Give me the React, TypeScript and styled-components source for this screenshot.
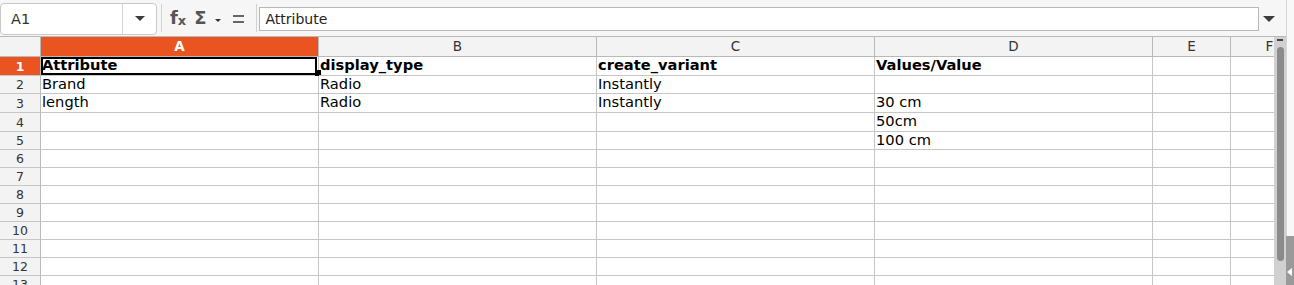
import React from 'react';
import styled, { createGlobalStyle } from 'styled-components';

const GlobalStyle = createGlobalStyle`
  html, body {
    margin: 0;
    padding: 0;
    background: #fff;
  }
  body {
    font-family: "DejaVu Sans", "Liberation Sans", sans-serif;
  }
`;

const ORANGE = '#e95420';
const GRID = '#c6c6c6';
const HEAD_LINE = '#b9b9b9';

const Window = styled.div`
  width: 1294px;
  height: 285px;
  overflow: hidden;
  display: flex;
  background: #fff;
`;

const Main = styled.div`
  flex: 1;
  min-width: 0;
  display: flex;
  flex-direction: column;
`;

/* toolbar */

const Toolbar = styled.div`
  height: 36px;
  flex-shrink: 0;
  border-bottom: 1px solid ${HEAD_LINE};
  background: #f6f6f6;
  display: flex;
  align-items: center;
`;

const NameBox = styled.div`
  width: 157px;
  height: 32px;
  margin-top: 1px;
  box-sizing: border-box;
  border: 1px solid #c9c9c9;
  border-radius: 4px;
  background: #fff;
  display: flex;
`;

const NameField = styled.div`
  flex: 1;
  padding-left: 10px;
  font-size: 14.5px;
  line-height: 30px;
  color: #333;
`;

const NameDrop = styled.div`
  width: 33px;
  border-left: 1px solid #d4d4d4;
  display: flex;
  align-items: center;
  justify-content: center;
`;

const Caret = styled.div<{ $w: number; $h: number; $color?: string }>`
  width: 0;
  height: 0;
  border-left: ${(p) => p.$w / 2}px solid transparent;
  border-right: ${(p) => p.$w / 2}px solid transparent;
  border-top: ${(p) => p.$h}px solid ${(p) => p.$color || '#3c3c3c'};
`;

const Separator = styled.div<{ $ml: number }>`
  width: 1px;
  height: 28px;
  margin-left: ${(p) => p.$ml}px;
  background: #d2d2d2;
`;

const FxIcon = styled.div`
  margin-left: 8px;
  display: flex;
  align-items: baseline;
  color: #555;
  font-weight: bold;
  font-family: "DejaVu Sans", sans-serif;
`;

const FxF = styled.span`
  font-size: 18px;
  line-height: 18px;
`;

const FxX = styled.span`
  font-size: 13px;
  line-height: 13px;
  margin-left: 0;
  position: relative;
  top: 1px;
`;

const SigmaIcon = styled.span`
  margin-left: 8px;
  font-size: 18px;
  font-weight: bold;
  color: #555;
  line-height: 18px;
`;

const SmallCaret = styled.div`
  margin-left: 8px;
  margin-top: 4px;
`;

const EqualIcon = styled.div`
  margin-left: 12px;
  margin-top: 2px;
  width: 11px;
  height: 4px;
  border-top: 2px solid #666;
  border-bottom: 2px solid #666;
`;

const FormulaInput = styled.div`
  margin-left: 2px;
  width: 1000px;
  height: 24px;
  margin-top: 1px;
  box-sizing: border-box;
  border: 1px solid #b8b8b8;
  background: #fff;
  padding-left: 6px;
  font-size: 14px;
  line-height: 22px;
  color: #222;
`;

const ExpandCaret = styled.div`
  margin-left: 4px;
  margin-top: 1px;
`;

/* sheet */

const Sheet = styled.div`
  flex: 1;
  display: flex;
  min-height: 0;
`;

const GridPane = styled.div`
  flex: 1;
  min-width: 0;
  overflow: hidden;
`;

const Row = styled.div<{ $h: number }>`
  display: flex;
  height: ${(p) => p.$h}px;
  width: max-content;
`;

const Corner = styled.div`
  width: 41px;
  flex-shrink: 0;
  box-sizing: border-box;
  background: #f3f3f3;
  border-right: 1px solid ${HEAD_LINE};
  border-bottom: 1px solid ${HEAD_LINE};
`;

const ColHead = styled.div<{ $w: number; $active?: boolean }>`
  width: ${(p) => p.$w}px;
  flex-shrink: 0;
  box-sizing: border-box;
  border-right: 1px solid ${HEAD_LINE};
  border-bottom: 1px solid ${HEAD_LINE};
  background: ${(p) => (p.$active ? ORANGE : '#f3f3f3')};
  color: ${(p) => (p.$active ? '#fff' : '#333')};
  font-weight: ${(p) => (p.$active ? 'bold' : 'normal')};
  font-size: 13.5px;
  line-height: 19px;
  text-align: center;
`;

const RowHead = styled.div<{ $active?: boolean }>`
  width: 41px;
  flex-shrink: 0;
  box-sizing: border-box;
  border-right: 1px solid ${HEAD_LINE};
  border-bottom: 1px solid ${GRID};
  background: ${(p) => (p.$active ? ORANGE : '#f3f3f3')};
  color: ${(p) => (p.$active ? '#fff' : '#333')};
  font-weight: ${(p) => (p.$active ? 'bold' : 'normal')};
  font-size: 12.5px;
  display: flex;
  align-items: center;
  justify-content: center;
`;

const Cell = styled.div<{ $w: number; $bold?: boolean }>`
  position: relative;
  width: ${(p) => p.$w}px;
  flex-shrink: 0;
  box-sizing: border-box;
  border-right: 1px solid ${GRID};
  border-bottom: 1px solid ${GRID};
  padding-left: 1px;
  font-size: 14.67px;
  font-weight: ${(p) => (p.$bold ? 'bold' : 'normal')};
  color: #000;
  white-space: nowrap;
  line-height: 16px;
`;

const Selection = styled.div`
  position: absolute;
  top: 0;
  left: 0;
  right: 1px;
  bottom: 0;
  border: 2px solid #000;
  box-sizing: border-box;
`;

const FillHandle = styled.div`
  position: absolute;
  right: -3px;
  bottom: -1px;
  width: 6px;
  height: 6px;
  background: #000;
`;

/* scrollbar + sidebar */

const VScroll = styled.div`
  width: 12px;
  flex-shrink: 0;
  background: #d0d0d0;
  display: flex;
  flex-direction: column;
  align-items: center;
`;

const ScrollButton = styled.div`
  height: 9px;
  width: 100%;
  display: flex;
  justify-content: center;
  padding-top: 2px;
  box-sizing: border-box;
`;

const MinusMark = styled.div`
  width: 6px;
  height: 2px;
  background: #444;
`;

const Thumb = styled.div`
  margin-top: 1px;
  width: 7px;
  height: 214px;
  border-radius: 4px;
  background: #8b8b8b;
`;

const Sidebar = styled.div`
  width: 8px;
  flex-shrink: 0;
  display: flex;
  flex-direction: column;
`;

const SidebarFill = styled.div`
  flex: 1;
  border-left: 1px solid #d6d6d6;
  background: #f8f8f8;
`;

const DeckToggle = styled.div`
  height: 49px;
  flex-shrink: 0;
  background: #9a9a9a;
  box-sizing: border-box;
  padding-top: 32px;
  padding-left: 1px;
`;

const LeftArrow = styled.div`
  width: 0;
  height: 0;
  border-top: 4px solid transparent;
  border-bottom: 4px solid transparent;
  border-right: 5px solid #fff;
`;

const columns = [
  { name: 'A', w: 278 },
  { name: 'B', w: 278 },
  { name: 'C', w: 278 },
  { name: 'D', w: 278 },
  { name: 'E', w: 78 },
  { name: 'F', w: 78 },
];

const rowHeights = [19, 18, 19, 19, 18, 18, 18, 18, 18, 18, 18, 18, 18];

const data: string[][] = [
  ['Attribute', 'display_type', 'create_variant', 'Values/Value'],
  ['Brand', 'Radio', 'Instantly', ''],
  ['length', 'Radio', 'Instantly', '30 cm'],
  ['', '', '', '50cm'],
  ['', '', '', '100 cm'],
];

export default function App() {
  return (
    <>
      <GlobalStyle />
      <Window>
        <Main>
          <Toolbar>
            <NameBox>
              <NameField>A1</NameField>
              <NameDrop>
                <Caret $w={10} $h={5} />
              </NameDrop>
            </NameBox>
            <Separator $ml={4} />
            <FxIcon>
              <FxF>f</FxF>
              <FxX>x</FxX>
            </FxIcon>
            <SigmaIcon>Σ</SigmaIcon>
            <SmallCaret>
              <Caret $w={6} $h={3} $color="#333" />
            </SmallCaret>
            <EqualIcon />
            <Separator $ml={12} />
            <FormulaInput>Attribute</FormulaInput>
            <ExpandCaret>
              <Caret $w={12} $h={6} />
            </ExpandCaret>
          </Toolbar>
          <Sheet>
            <GridPane>
              <Row $h={20}>
                <Corner />
                {columns.map((c, i) => (
                  <ColHead key={c.name} $w={c.w} $active={i === 0}>
                    {c.name}
                  </ColHead>
                ))}
              </Row>
              {rowHeights.map((h, r) => (
                <Row key={r} $h={h}>
                  <RowHead $active={r === 0}>{r + 1}</RowHead>
                  {columns.map((c, ci) => (
                    <Cell key={c.name} $w={c.w} $bold={r === 0}>
                      {(data[r] && data[r][ci]) || ''}
                      {r === 0 && ci === 0 && (
                        <>
                          <Selection />
                          <FillHandle />
                        </>
                      )}
                    </Cell>
                  ))}
                </Row>
              ))}
            </GridPane>
            <VScroll>
              <ScrollButton>
                <MinusMark />
              </ScrollButton>
              <Thumb />
            </VScroll>
          </Sheet>
        </Main>
        <Sidebar>
          <SidebarFill />
          <DeckToggle>
            <LeftArrow />
          </DeckToggle>
        </Sidebar>
      </Window>
    </>
  );
}
